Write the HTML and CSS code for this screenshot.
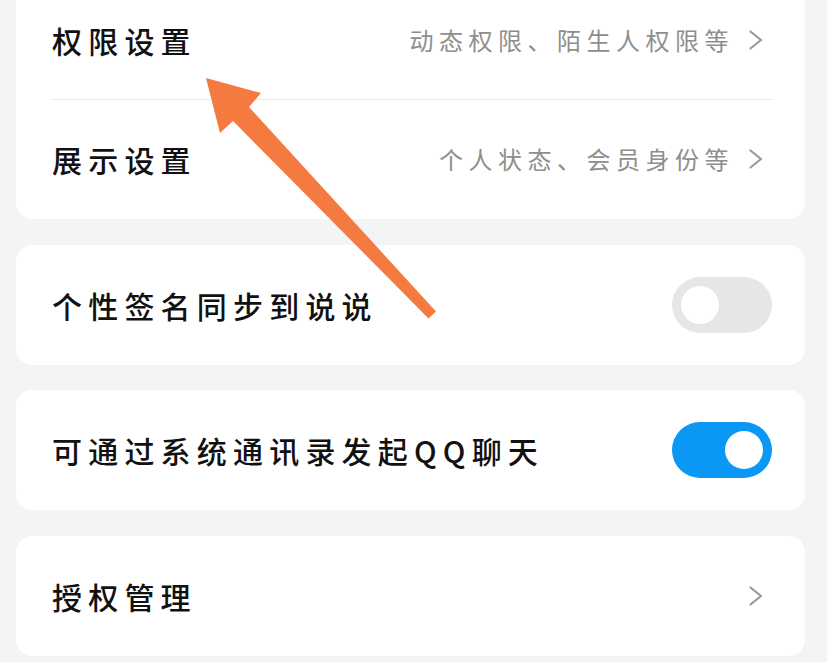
FILE: index.html
```html
<!DOCTYPE html>
<html lang="zh-CN">
<head>
<meta charset="utf-8">
<title>设置</title>
<link rel="stylesheet" href="styles.css">
</head>
<body>
<main class="screen">
  <section class="card">
    <div class="row row-divided">
      <span class="title">权限设置</span>
      <span class="meta"><span class="desc">动态权限、陌生人权限等</span><svg class="chev" viewBox="0 0 16 20" width="16" height="20"><path d="M2.5 1.5 L13 10 L2.5 18.5" fill="none" stroke="#9a9a9a" stroke-width="2.2" stroke-linecap="round" stroke-linejoin="round"/></svg></span>
    </div>
    <div class="row">
      <span class="title">展示设置</span>
      <span class="meta"><span class="desc">个人状态、会员身份等</span><svg class="chev" viewBox="0 0 16 20" width="16" height="20"><path d="M2.5 1.5 L13 10 L2.5 18.5" fill="none" stroke="#9a9a9a" stroke-width="2.2" stroke-linecap="round" stroke-linejoin="round"/></svg></span>
    </div>
  </section>
  <section class="card">
    <div class="row">
      <span class="title">个性签名同步到说说</span>
      <span class="toggle"><span class="knob"></span></span>
    </div>
  </section>
  <section class="card">
    <div class="row">
      <span class="title">可通过系统通讯录发起QQ聊天</span>
      <span class="toggle on"><span class="knob"></span></span>
    </div>
  </section>
  <section class="card">
    <div class="row">
      <span class="title">授权管理</span>
      <span class="meta"><svg class="chev" viewBox="0 0 16 20" width="16" height="20"><path d="M2.5 1.5 L13 10 L2.5 18.5" fill="none" stroke="#9a9a9a" stroke-width="2.2" stroke-linecap="round" stroke-linejoin="round"/></svg></span>
    </div>
  </section>
</main>
<svg class="arrow" viewBox="0 0 827 662" width="827" height="662">
  <polygon points="206,78 261,93 249,107 436,311.5 428.5,318.5 233,121 220,133" fill="#f47a40"/>
</svg>
</body>
</html>
```

FILE: styles.css
```css
html, body {
  margin: 0;
  padding: 0;
  overflow: hidden;
  background: #f3f4f6;
}
body {
  width: 827px;
  height: 662px;
  font-family: "Noto Sans CJK SC", "Noto Sans", sans-serif;
}
.screen {
  display: flex;
  flex-direction: column;
  gap: 25.5px;
  margin-top: -20px;
  padding-left: 16px;
  width: 789px;
}
.card {
  background: #ffffff;
  border-radius: 16px;
  display: flex;
  flex-direction: column;
}
.row {
  height: 120px;
  flex: none;
  display: flex;
  align-items: center;
  justify-content: space-between;
  padding: 0 33px 0 36px;
  box-sizing: border-box;
  position: relative;
}
.card:first-child .row {
  height: 119.5px;
}
.row-divided::after {
  content: "";
  position: absolute;
  left: 34px;
  right: 32px;
  bottom: 0;
  height: 1px;
  background: #ececec;
}
.title {
  font-size: 30px;
  font-weight: 500;
  color: #111111;
  letter-spacing: 6.2px;
  line-height: 1;
}
.meta {
  display: flex;
  align-items: center;
}
.desc {
  font-size: 24px;
  color: #8e8e8e;
  letter-spacing: 5.5px;
  line-height: 1;
  margin-right: 14px;
}
.chev {
  display: block;
  margin-right: 8px;
}
.toggle {
  width: 100px;
  height: 56px;
  border-radius: 28px;
  background: #e6e6e6;
  display: flex;
  align-items: center;
  padding: 0 9px;
  box-sizing: border-box;
}
.toggle .knob {
  width: 38px;
  height: 38px;
  border-radius: 50%;
  background: #ffffff;
}
.toggle.on {
  background: #0a98f4;
  justify-content: flex-end;
}
.arrow {
  position: absolute;
  top: 0;
  left: 0;
  pointer-events: none;
}
```
